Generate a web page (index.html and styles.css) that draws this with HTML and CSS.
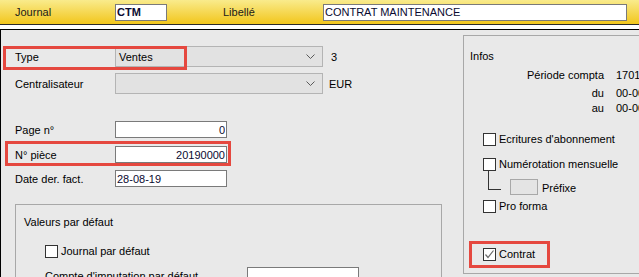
FILE: index.html
```html
<!DOCTYPE html>
<html lang="fr">
<head>
    <meta charset="UTF-8">
    <meta name="viewport" content="width=device-width, initial-scale=1.0">
    <title>Journal CTM</title>
    <link rel="stylesheet" href="styles.css">
</head>
<body>
    <div class="topbar">
        <span class="top-label">Journal</span>
        <input class="field field-code" type="text" value="CTM" readonly>
        <span class="top-label top-label-next">Libellé</span>
        <input class="field field-title" type="text" value="CONTRAT MAINTENANCE" readonly>
    </div>

    <div class="panel">
        <div class="main-col">
            <div class="row row-type">
                <span class="label">Type</span>
                <div class="combo">
                    <span>Ventes</span>
                    <svg class="chevron" width="9" height="5" viewBox="0 0 9 5"><polyline points="0.5,0.5 4.5,4.5 8.5,0.5" fill="none" stroke="#5a5a5a" stroke-width="1"/></svg>
                </div>
                <span class="aside">3</span>
                <div class="mark mark-type"></div>
            </div>
            <div class="row row-central">
                <span class="label">Centralisateur</span>
                <div class="combo">
                    <span></span>
                    <svg class="chevron" width="9" height="5" viewBox="0 0 9 5"><polyline points="0.5,0.5 4.5,4.5 8.5,0.5" fill="none" stroke="#5a5a5a" stroke-width="1"/></svg>
                </div>
                <span class="aside aside-eur">EUR</span>
            </div>

            <div class="row row-small row-page">
                <span class="label">Page n°</span>
                <input class="field field-num" type="text" value="0" readonly>
            </div>
            <div class="row row-small row-piece">
                <span class="label">N° pièce</span>
                <input class="field field-num" type="text" value="20190000" readonly>
                <div class="mark mark-piece"></div>
            </div>
            <div class="row row-small row-date">
                <span class="label">Date der. fact.</span>
                <input class="field field-date" type="text" value="28-08-19" readonly>
            </div>

            <div class="group">
                <div class="group-title">Valeurs par défaut</div>
                <label class="check check-journal"><span class="box"></span>Journal par défaut</label>
                <div class="row row-small row-compte">
                    <span class="label label-wide">Compte d'imputation par défaut</span>
                    <input class="field field-compte" type="text" value="" readonly>
                </div>
            </div>
        </div>

        <div class="infos">
            <div class="infos-title">Infos</div>
            <div class="info-grid">
                <span class="info-key">Période compta</span><span>1701</span>
                <span class="info-key info-du">du</span><span class="info-du">00-00-00</span>
                <span class="info-key">au</span><span>00-00-00</span>
            </div>
            <label class="check check-abo"><span class="box"></span>Ecritures d'abonnement</label>
            <label class="check check-num"><span class="box"></span>Numérotation mensuelle</label>
            <div class="prefix-row">
                <span class="tree-line"></span>
                <span class="prefix-field"></span>
                <span>Préfixe</span>
            </div>
            <label class="check check-pro"><span class="box"></span>Pro forma</label>
            <label class="check check-contrat">
                <span class="box box-checked">
                    <svg width="11" height="11" viewBox="0 0 11 11"><polyline points="1.5,5.5 4,8.5 9.5,1.5" fill="none" stroke="#6a6a6a" stroke-width="1.2"/></svg>
                </span>Contrat
                <span class="mark mark-contrat"></span>
            </label>
        </div>
    </div>
</body>
</html>
```

FILE: styles.css
```css
body {
    margin: 0;
    font-family: "Liberation Sans", Arial, sans-serif;
    font-size: 11px;
    color: #000;
    background-color: #ffffff;
    overflow: hidden;
}
.topbar {
    display: flex;
    align-items: center;
    height: 24px;
    padding-left: 15px;
    border-bottom: 1px solid #2a2a2a;
    background: linear-gradient(#f9eb8c, #f2c61c);
}
.top-label {
    width: 100px;
    color: #1a1a1a;
}
.top-label-next {
    margin-left: 56px;
}
.field {
    box-sizing: border-box;
    height: 17px;
    margin: 0;
    padding: 0 1px;
    border: 1px solid #7a7a7a;
    background-color: #ffffff;
    font-family: "Liberation Sans", Arial, sans-serif;
    font-size: 11px;
    color: #0a0a30;
    outline: none;
}
.field-code {
    width: 52px;
    font-weight: bold;
}
.field-title {
    width: 304px;
}
.panel {
    display: flex;
    align-items: flex-start;
    height: 260px;
    margin-top: 4px;
    border-top: 1px solid #000;
    border-left: 1px solid #000;
    background-color: #e9e9e9;
}
.main-col {
    width: 461px;
    flex-shrink: 0;
}
.row {
    position: relative;
    display: flex;
    align-items: center;
    height: 21px;
    padding-left: 14px;
}
.label {
    width: 100px;
}
.label-wide {
    width: 202px;
}
.combo {
    box-sizing: border-box;
    display: flex;
    align-items: center;
    justify-content: space-between;
    width: 208px;
    height: 21px;
    padding: 0 7px 0 3px;
    border: 1px solid #b4b4b4;
    background-color: #e2e2e2;
}
.aside {
    margin-left: 8px;
}
.aside-eur {
    margin-left: 6px;
}
.row-type {
    margin-top: 16px;
}
.row-central {
    margin-top: 6px;
}
.row-small {
    height: 17px;
}
.row-page {
    margin-top: 27px;
}
.row-piece {
    margin-top: 8px;
}
.row-date {
    margin-top: 7px;
}
.field-num {
    width: 112px;
    text-align: right;
}
.field-date {
    width: 112px;
}
.field-compte {
    width: 112px;
}
.mark {
    position: absolute;
    box-sizing: border-box;
    border: 3px solid #e5483f;
    pointer-events: none;
}
.mark-type {
    left: 2px;
    top: 0;
    width: 184px;
    height: 24px;
}
.mark-piece {
    left: 4px;
    top: -5px;
    width: 226px;
    height: 25px;
}
.group {
    box-sizing: border-box;
    width: 427px;
    height: 90px;
    margin: 17px 0 0 14px;
    border: 1px solid #a8a8a8;
}
.group-title {
    margin: 10px 0 0 8px;
    line-height: 14px;
}
.check {
    position: relative;
    display: flex;
    align-items: center;
    height: 14px;
    line-height: 14px;
}
.box {
    box-sizing: border-box;
    display: flex;
    align-items: center;
    justify-content: center;
    width: 13px;
    height: 13px;
    margin-right: 3px;
    border: 1px solid #333;
    background-color: #ffffff;
}
.check-journal {
    margin: 15px 0 0 29px;
}
.row-compte {
    margin-top: 9px;
    padding-left: 29px;
}
.infos {
    box-sizing: border-box;
    width: 220px;
    height: 239px;
    margin: 5px 0 0 1px;
    padding: 0 6px;
    border: 1px solid #a8a8a8;
    flex-shrink: 0;
}
.infos-title {
    margin-top: 13px;
    line-height: 14px;
}
.info-grid {
    display: grid;
    grid-template-columns: 134px auto;
    column-gap: 12px;
    margin-top: 5px;
    line-height: 15px;
    white-space: nowrap;
}
.info-key {
    text-align: right;
}
.info-du {
    margin-top: 3px;
}
.check-abo {
    margin: 16px 0 0 13px;
}
.check-num {
    margin: 11px 0 0 13px;
}
.prefix-row {
    display: flex;
    align-items: flex-end;
    height: 24px;
    margin-left: 13px;
}
.tree-line {
    box-sizing: border-box;
    width: 13px;
    height: 19px;
    margin: 0 9px 5px 5px;
    border-left: 1px solid #333;
    border-bottom: 1px solid #333;
}
.prefix-field {
    box-sizing: border-box;
    width: 28px;
    height: 16px;
    margin-right: 4px;
    border: 1px solid #a8a8a8;
    background-color: #e4e4e4;
}
.prefix-row span:last-child {
    margin-bottom: 1px;
}
.check-pro {
    margin: 4px 0 0 13px;
}
.check-contrat {
    margin: 34px 0 0 13px;
}
.mark-contrat {
    left: -14px;
    top: -6px;
    width: 81px;
    height: 27px;
}
```
